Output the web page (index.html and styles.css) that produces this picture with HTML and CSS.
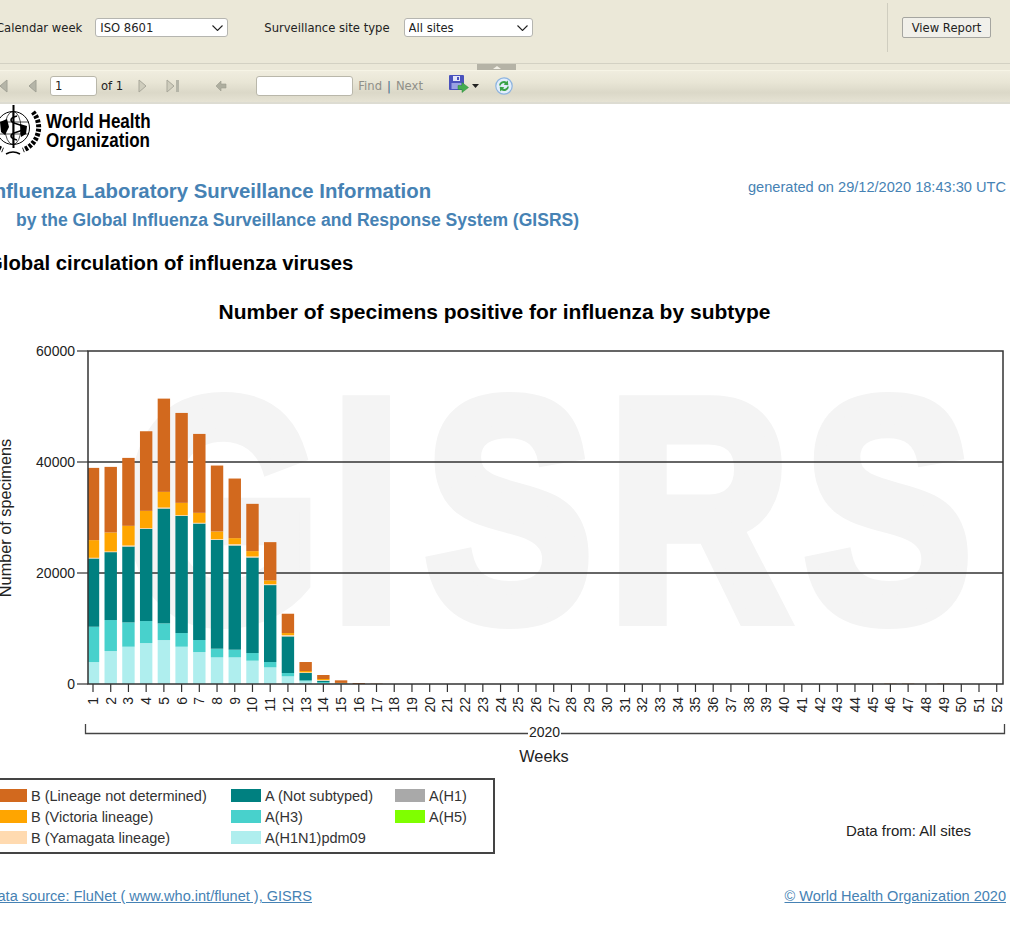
FILE: index.html
```html
<!DOCTYPE html>
<html lang="en">
<head>
    <meta charset="UTF-8">
    <title>Influenza Laboratory Surveillance Information</title>
    <link rel="stylesheet" href="styles.css">
</head>
<body>
    <div class="viewer">
        <div class="params">
            <label class="param-label first">Calendar week</label>
            <select class="param-select week"><option>ISO 8601</option></select>
            <label class="param-label site">Surveillance site type</label>
            <select class="param-select sites"><option>All sites</option></select>
            <div class="params-action">
                <button class="view-report">View Report</button>
            </div>
        </div>
        <div class="splitter"><span class="splitter-handle"></span></div>
        <div class="toolbar">
            <svg class="tool first-page" width="14" height="14" viewBox="0 0 14 14"><rect x="0" y="1" width="2" height="12" fill="#b5b5a8"/><path d="M11 1v12L4 7z" fill="#b5b5a8" stroke="#a2a296"/></svg>
            <svg class="tool prev" width="9" height="14" viewBox="0 0 9 14"><path d="M8 1v12L1 7z" fill="#b5b5a8" stroke="#a2a296"/></svg>
            <input class="page-input" value="1">
            <span class="page-count">of 1</span>
            <svg class="tool next" width="9" height="14" viewBox="0 0 9 14"><path d="M1 1v12l7-6z" fill="#cfcdbd" stroke="#a8a79a"/></svg>
            <svg class="tool last" width="14" height="14" viewBox="0 0 14 14"><path d="M1 1v12l7-6z" fill="#cfcdbd" stroke="#a8a79a"/><rect x="10" y="1" width="3" height="12" fill="#b5b5a8"/></svg>
            <svg class="tool back" width="12" height="12" viewBox="0 0 12 12"><path d="M6 1v3h5v4H6v3L1 6z" fill="#aeae9f" stroke="#9b9b8e" stroke-width=".6"/></svg>
            <input class="find-input">
            <span class="find-link">Find</span>
            <span class="find-sep">|</span>
            <span class="find-link">Next</span>
            <svg class="tool save" width="21" height="19" viewBox="0 0 21 19">
                <rect x="0" y="0" width="15" height="15" rx="1" fill="#4a52bd"/>
                <rect x="4" y="1" width="7" height="5" fill="#e4e7f8"/>
                <rect x="8" y="2" width="2" height="3" fill="#4a52bd"/>
                <rect x="2.500" y="8" width="10" height="6" fill="#9aa2e4"/>
                <path d="M9 10.500h4V7.500l6.500 5-6.500 5v-3H9z" fill="#45ad50" stroke="#2d8a3a" stroke-width=".5"/>
            </svg>
            <svg class="tool save-menu" width="7" height="4" viewBox="0 0 7 4"><path d="M0 0h7L3.500 4z" fill="#222"/></svg>
            <svg class="tool refresh" width="18" height="18" viewBox="0 0 18 18">
                <circle cx="9" cy="9" r="8.200" fill="#e3eefb" stroke="#8db4e0" stroke-width="1.200"/>
                <path d="M4 8.500a5 5 0 0 1 7.500-3.800l1.300-1.200.5 4.700-4.600-.5 1.200-1.300a3 3 0 0 0-4.200 2.100z" fill="#3aa346"/>
                <path d="M14 9.500a5 5 0 0 1-7.500 3.800l-1.300 1.200-.5-4.700 4.600.5-1.200 1.300a3 3 0 0 0 4.200-2.100z" fill="#3aa346"/>
            </svg>
        </div>

        <div class="report">
            <div class="logo">
                <svg class="emblem" width="50" height="54" viewBox="0 0 50 54">
                    <g fill="none" stroke="#000">
                        <circle cx="21" cy="24" r="16.500" stroke-width="1"/>
                        <ellipse cx="21" cy="24" rx="8" ry="16.500" stroke-width=".7"/>
                        <path d="M5 18h32M5 30h32M21 8v32" stroke-width=".7"/>
                        <path d="M41 8a24 24 0 0 1-10 38" stroke-width="5" stroke-dasharray="3 1.500"/>
                        <path d="M1 8a24 24 0 0 0 10 38" stroke-width="5" stroke-dasharray="3 1.500"/>
                        <path d="M14 50q7-4 14 0" stroke-width="1.500"/>
                        <path d="M25 12c-8 2-8 6 0 8s8 6 0 8-8 6 0 8" stroke-width="1.600"/>
                    </g>
                    <rect x="20.500" y="1" width="2" height="43"/>
                    <path d="M8 18l7-3 2 8-4 8-4-3zM28 20l7 2-1 8-5 3z"/>
                </svg>
                <div class="logo-text">World Health<br>Organization</div>
            </div>

            <div class="title-row">
                <h1 class="main-title">Influenza Laboratory Surveillance Information</h1>
                <span class="generated">generated on 29/12/2020 18:43:30 UTC</span>
            </div>
            <h2 class="sub-title">by the Global Influenza Surveillance and Response System (GISRS)</h2>
            <h2 class="section-title">Global circulation of influenza viruses</h2>
            <h3 class="chart-title">Number of specimens positive for influenza by subtype</h3>

            <svg id="chart" class="chart" width="1010" height="435" viewBox="0 340 1010 435"></svg>

            <div class="legend-row">
                <div class="legend">
                    <div class="legend-item"><i class="swatch lineage-nd"></i>B (Lineage not determined)</div>
                    <div class="legend-item"><i class="swatch not-subtyped"></i>A (Not subtyped)</div>
                    <div class="legend-item"><i class="swatch h1"></i>A(H1)</div>
                    <div class="legend-item"><i class="swatch victoria"></i>B (Victoria lineage)</div>
                    <div class="legend-item"><i class="swatch h3"></i>A(H3)</div>
                    <div class="legend-item"><i class="swatch h5"></i>A(H5)</div>
                    <div class="legend-item"><i class="swatch yamagata"></i>B (Yamagata lineage)</div>
                    <div class="legend-item"><i class="swatch pdm09"></i>A(H1N1)pdm09</div>
                </div>
                <div class="data-from">Data from: All sites</div>
            </div>

            <div class="footer">
                <a href="#">Data source: FluNet ( www.who.int/flunet ), GISRS</a>
                <a href="#">© World Health Organization 2020</a>
            </div>
        </div>
    </div>
    <script src="chart.js"></script>
</body>
</html>
```

FILE: styles.css
```css
body {
    margin: 0;
    background: white;
    font-family: "Liberation Sans", Arial, sans-serif;
    overflow: hidden;
}

.viewer {
    width: 1010px;
    height: 925px;
    overflow: hidden;
}

/* parameter bar */
.params {
    height: 63px;
    background: #ebe8d8;
    border-bottom: 1px solid #d3d1c3;
    display: flex;
    align-items: flex-start;
    font-family: "DejaVu Sans", Verdana, sans-serif;
    font-size: 11.600px;
    color: #222;
}

.param-label {
    margin-top: 21px;
    white-space: nowrap;
}

.param-label.first {
    margin-left: -4px;
}

.param-label.site {
    margin-left: 36px;
}

.param-select {
    appearance: none;
    margin-top: 18px;
    height: 19px;
    background: white url("data:image/svg+xml,%3Csvg xmlns='http://www.w3.org/2000/svg' width='11' height='6'%3E%3Cpath d='M.5.5l5 5 5-5' fill='none' stroke='%23222' stroke-width='1.100'/%3E%3C/svg%3E") no-repeat right 4px center;
    border: 1px solid #b5b5b0;
    border-radius: 3px;
    font-family: inherit;
    font-size: 11.600px;
    color: #222;
    padding: 0 0 0 4px;
}

.param-select.week {
    width: 133px;
    margin-left: 13px;
}

.param-select.sites {
    width: 129px;
    margin-left: 14px;
}

.params-action {
    margin-left: auto;
    margin-top: 3px;
    height: 49px;
    width: 123px;
    border-left: 1px solid #cfcdbf;
    padding: 14px 0 0 14px;
    box-sizing: border-box;
}

.view-report {
    width: 89px;
    height: 21px;
    padding: 0;
    background: #f1f0ea;
    border: 1px solid #a5a5a0;
    border-radius: 2px;
    font-family: inherit;
    font-size: 11.600px;
    color: #222;
}

.splitter {
    height: 6px;
    background: #ebe8d8;
    border-bottom: 1px solid #f6f4e6;
    position: relative;
}

.splitter-handle {
    position: absolute;
    left: 477px;
    top: 0;
    width: 39px;
    height: 6px;
    background: #b5b3a6;
}

.splitter-handle::after {
    content: "";
    position: absolute;
    left: 16px;
    top: 2px;
    border-left: 4px solid transparent;
    border-right: 4px solid transparent;
    border-bottom: 3px solid #f2f0e6;
}

/* toolbar */
.toolbar {
    height: 30px;
    padding-bottom: 1px;
    background: linear-gradient(#f0eddf, #e9e6d6 35%, #dbd8c8 70%, #e6e3d4);
    border-bottom: 2px solid #dddcd2;
    display: flex;
    align-items: center;
    font-family: "DejaVu Sans", Verdana, sans-serif;
    font-size: 11.600px;
    color: #222;
}

.tool {
    flex: none;
}

.first-page {
    margin-left: -4px;
}

.prev {
    margin-left: 18px;
}

.page-input {
    width: 47px;
    height: 20px;
    margin-left: 13px;
    padding: 0 0 0 4px;
    box-sizing: border-box;
    background: white;
    border: 1px solid #b9b7aa;
    border-radius: 3px;
    font-family: inherit;
    font-size: 11.600px;
    color: #222;
}

.page-count {
    margin-left: 4px;
}

.next {
    margin-left: 15px;
}

.last {
    margin-left: 19px;
}

.back {
    margin-left: 35px;
}

.find-input {
    width: 97px;
    height: 20px;
    margin-left: 29px;
    box-sizing: border-box;
    background: white;
    border: 1px solid #b9b7aa;
    border-radius: 3px;
}

.find-link {
    color: #8f8f88;
    margin-left: 5px;
}

.find-sep {
    margin-left: 5px;
    color: #44668c;
}

.save {
    margin-left: 26px;
    margin-top: -3px;
}

.save-menu {
    margin-left: 2px;
}

.refresh {
    margin-left: 16px;
}

/* report */
.report {
    margin-left: -13px;
    width: 1023px;
}

.logo {
    height: 54px;
    display: flex;
    align-items: flex-start;
}

.emblem {
    margin-left: 5px;
    flex: none;
}

.logo-text {
    margin: 7px 0 0 4px;
    font-weight: bold;
    font-size: 21px;
    line-height: 19px;
    color: black;
    white-space: nowrap;
    transform: scaleX(.81);
    transform-origin: left top;
}

.title-row {
    display: flex;
    justify-content: space-between;
    align-items: flex-start;
    margin: 21px 0 0 1px;
    padding-right: 4px;
}

.main-title {
    margin: 0;
    font-size: 20.350px;
    line-height: 24px;
    color: #4682b4;
}

.generated {
    font-size: 14.600px;
    line-height: 20px;
    margin-top: -2px;
    color: #4682b4;
}

.sub-title {
    margin: 7px 0 0 29px;
    font-size: 17.550px;
    line-height: 20px;
    color: #4682b4;
}

.section-title {
    margin: 21px 0 0 0;
    font-size: 20.300px;
    line-height: 24px;
    color: black;
}

.chart-title {
    margin: 24px 0 0 0;
    padding-right: 8px;
    text-align: center;
    font-size: 21px;
    line-height: 26px;
    color: black;
}

.chart {
    display: block;
    margin: 15px 0 0 13px;
}

.watermark {
    font-family: "Liberation Sans", sans-serif;
    font-weight: bold;
    font-size: 315px;
    fill: #f4f4f4;
    stroke: #f4f4f4;
    stroke-width: 14px;
}

.grid-line {
    stroke: #333;
    stroke-width: 1.300;
}

.plot-frame {
    fill: none;
    stroke: #333;
    stroke-width: 1.500;
}

.axis-tick {
    stroke: #333;
    stroke-width: 1.200;
}

.axis-text {
    font-family: "Liberation Sans", sans-serif;
    font-size: 14px;
    fill: #222;
}

.axis-title {
    font-family: "Liberation Sans", sans-serif;
    font-size: 16.300px;
    fill: #222;
}

.year-bracket {
    fill: none;
    stroke: #444;
    stroke-width: 1.300;
}

.year-gap {
    fill: white;
}

/* legend */
.legend-row {
    display: flex;
    align-items: flex-end;
    margin-top: 3px;
}

.legend {
    width: 508px;
    height: 76px;
    box-sizing: border-box;
    border: 2px solid #444;
    border-left: none;
    padding: 5px 0 0 10px;
    display: grid;
    grid-template-columns: 234px 164px auto;
    grid-auto-rows: 21px;
    font-size: 14.500px;
    color: #333;
}

.legend-item {
    display: flex;
    align-items: center;
    white-space: nowrap;
}

.swatch {
    width: 30px;
    height: 13px;
    margin-right: 4px;
    flex: none;
}

.lineage-nd { background: #d2691e; }
.victoria { background: #ffa500; }
.yamagata { background: #ffdab0; }
.not-subtyped { background: #008080; }
.h3 { background: #48d1cc; }
.pdm09 { background: #afeeee; }
.h1 { background: #a9a9a9; }
.h5 { background: #7fff00; }

.data-from {
    margin: 0 0 15px 351px;
    font-size: 15px;
    color: #222;
    white-space: nowrap;
}

.footer {
    display: flex;
    justify-content: space-between;
    margin-top: 34px;
    padding-right: 4px;
    font-size: 14.550px;
}

.footer a {
    color: #4682b4;
}
```

FILE: chart.js
```js
// stacks run bottom to top: pdm09, H3, not subtyped, Yamagata, Victoria, not determined
let weeks = {
    1: [3960, 6360, 12300, 120, 3180, 13020],
    2: [5940, 5580, 12240, 120, 3420, 11820],
    3: [6720, 4380, 13680, 180, 3540, 12240],
    4: [7380, 3960, 16620, 120, 3120, 14340],
    5: [7920, 3000, 20700, 180, 2820, 16800],
    6: [6720, 2460, 21120, 120, 2220, 16200],
    7: [5760, 2160, 21000, 120, 1800, 14220],
    8: [4800, 1560, 19620, 120, 1380, 11880],
    9: [4800, 1380, 18780, 240, 1080, 10740],
    10: [4200, 1380, 17220, 180, 960, 8520],
    11: [3000, 960, 13860, 180, 660, 6900],
    12: [1380, 600, 6600, 240, 360, 3480],
    13: [480, 180, 1320, 120, 240, 1620],
    14: [180, 180, 240, 120, 180, 720],
    15: [60, 20, 60, 20, 40, 460],
    16: [0, 0, 0, 0, 0, 180],
    17: [0, 0, 0, 0, 0, 60],
    46: [0, 0, 0, 0, 0, 60],
    47: [0, 0, 0, 0, 0, 60],
    49: [0, 0, 0, 0, 0, 60]
};
let colors = ['#afeeee', '#48d1cc', '#008080', '#ffdab0', '#ffa500', '#d2691e'];

let left = 88, right = 1003, top_ = 351, bottom = 684;
let firstTick = 93, step = 17.72, barWidth = 12.4;
let svg = document.getElementById('chart');

function add(tag, attrs, text) {
    let el = document.createElementNS('http://www.w3.org/2000/svg', tag);
    for (let key in attrs) {
        el.setAttribute(key, attrs[key]);
    }
    if (text) el.textContent = text;
    svg.appendChild(el);
    return el;
}

function yFor(value) {
    return bottom - value / 60000 * (bottom - top_);
}

// watermark sits behind everything, squeezed sideways with each letter placed
add('text', { class: 'watermark', transform: 'scale(.8 1)', x: '155.5 414 531 760 1005', y: 619 }, 'GISRS');

// y axis
[0, 20000, 40000, 60000].forEach(function (value) {
    let y = yFor(value);
    if (value > 0 && value < 60000) {
        add('line', { class: 'grid-line', x1: left, x2: right, y1: y, y2: y });
    }
    add('line', { class: 'axis-tick', x1: 77, x2: left, y1: y, y2: y });
    add('text', { class: 'axis-text', x: 75, y: y + 5, 'text-anchor': 'end' }, String(value));
});
add('text', { class: 'axis-title', transform: 'translate(11 518) rotate(-90)', 'text-anchor': 'middle' }, 'Number of specimens');

// bars, clipped to the plot so week 1 stops at the axis
let clip = add('clipPath', { id: 'plot' });
let clipRect = add('rect', { x: left, y: top_, width: right - left, height: bottom - top_ });
clip.appendChild(clipRect);

for (let week in weeks) {
    let x = firstTick + (week - 1) * step - barWidth / 2;
    let total = 0;
    weeks[week].forEach(function (value, i) {
        if (value === 0) return;
        let y = yFor(total + value);
        add('rect', {
            x: x, y: y, width: barWidth, height: yFor(total) - y,
            fill: colors[i], 'clip-path': 'url(#plot)'
        });
        total += value;
    });
}

add('rect', { class: 'plot-frame', x: left, y: top_, width: right - left, height: bottom - top_ });

// x axis
for (let week = 1; week <= 52; week++) {
    let x = firstTick + (week - 1) * step;
    add('line', { class: 'axis-tick', x1: x, x2: x, y1: bottom, y2: 692 });
    add('text', {
        class: 'axis-text',
        transform: 'translate(' + (x + 5) + ' 697) rotate(-90)',
        'text-anchor': 'end'
    }, String(week));
}

// year bracket and axis title
add('path', { class: 'year-bracket', d: 'M85.500 724V733.500H1004.500V724' });
add('rect', { class: 'year-gap', x: 528, y: 725, width: 33, height: 16 });
add('text', { class: 'axis-text', x: 544.5, y: 737, 'text-anchor': 'middle' }, '2020');
add('text', { class: 'axis-title', x: 544, y: 762, 'text-anchor': 'middle' }, 'Weeks');
```
